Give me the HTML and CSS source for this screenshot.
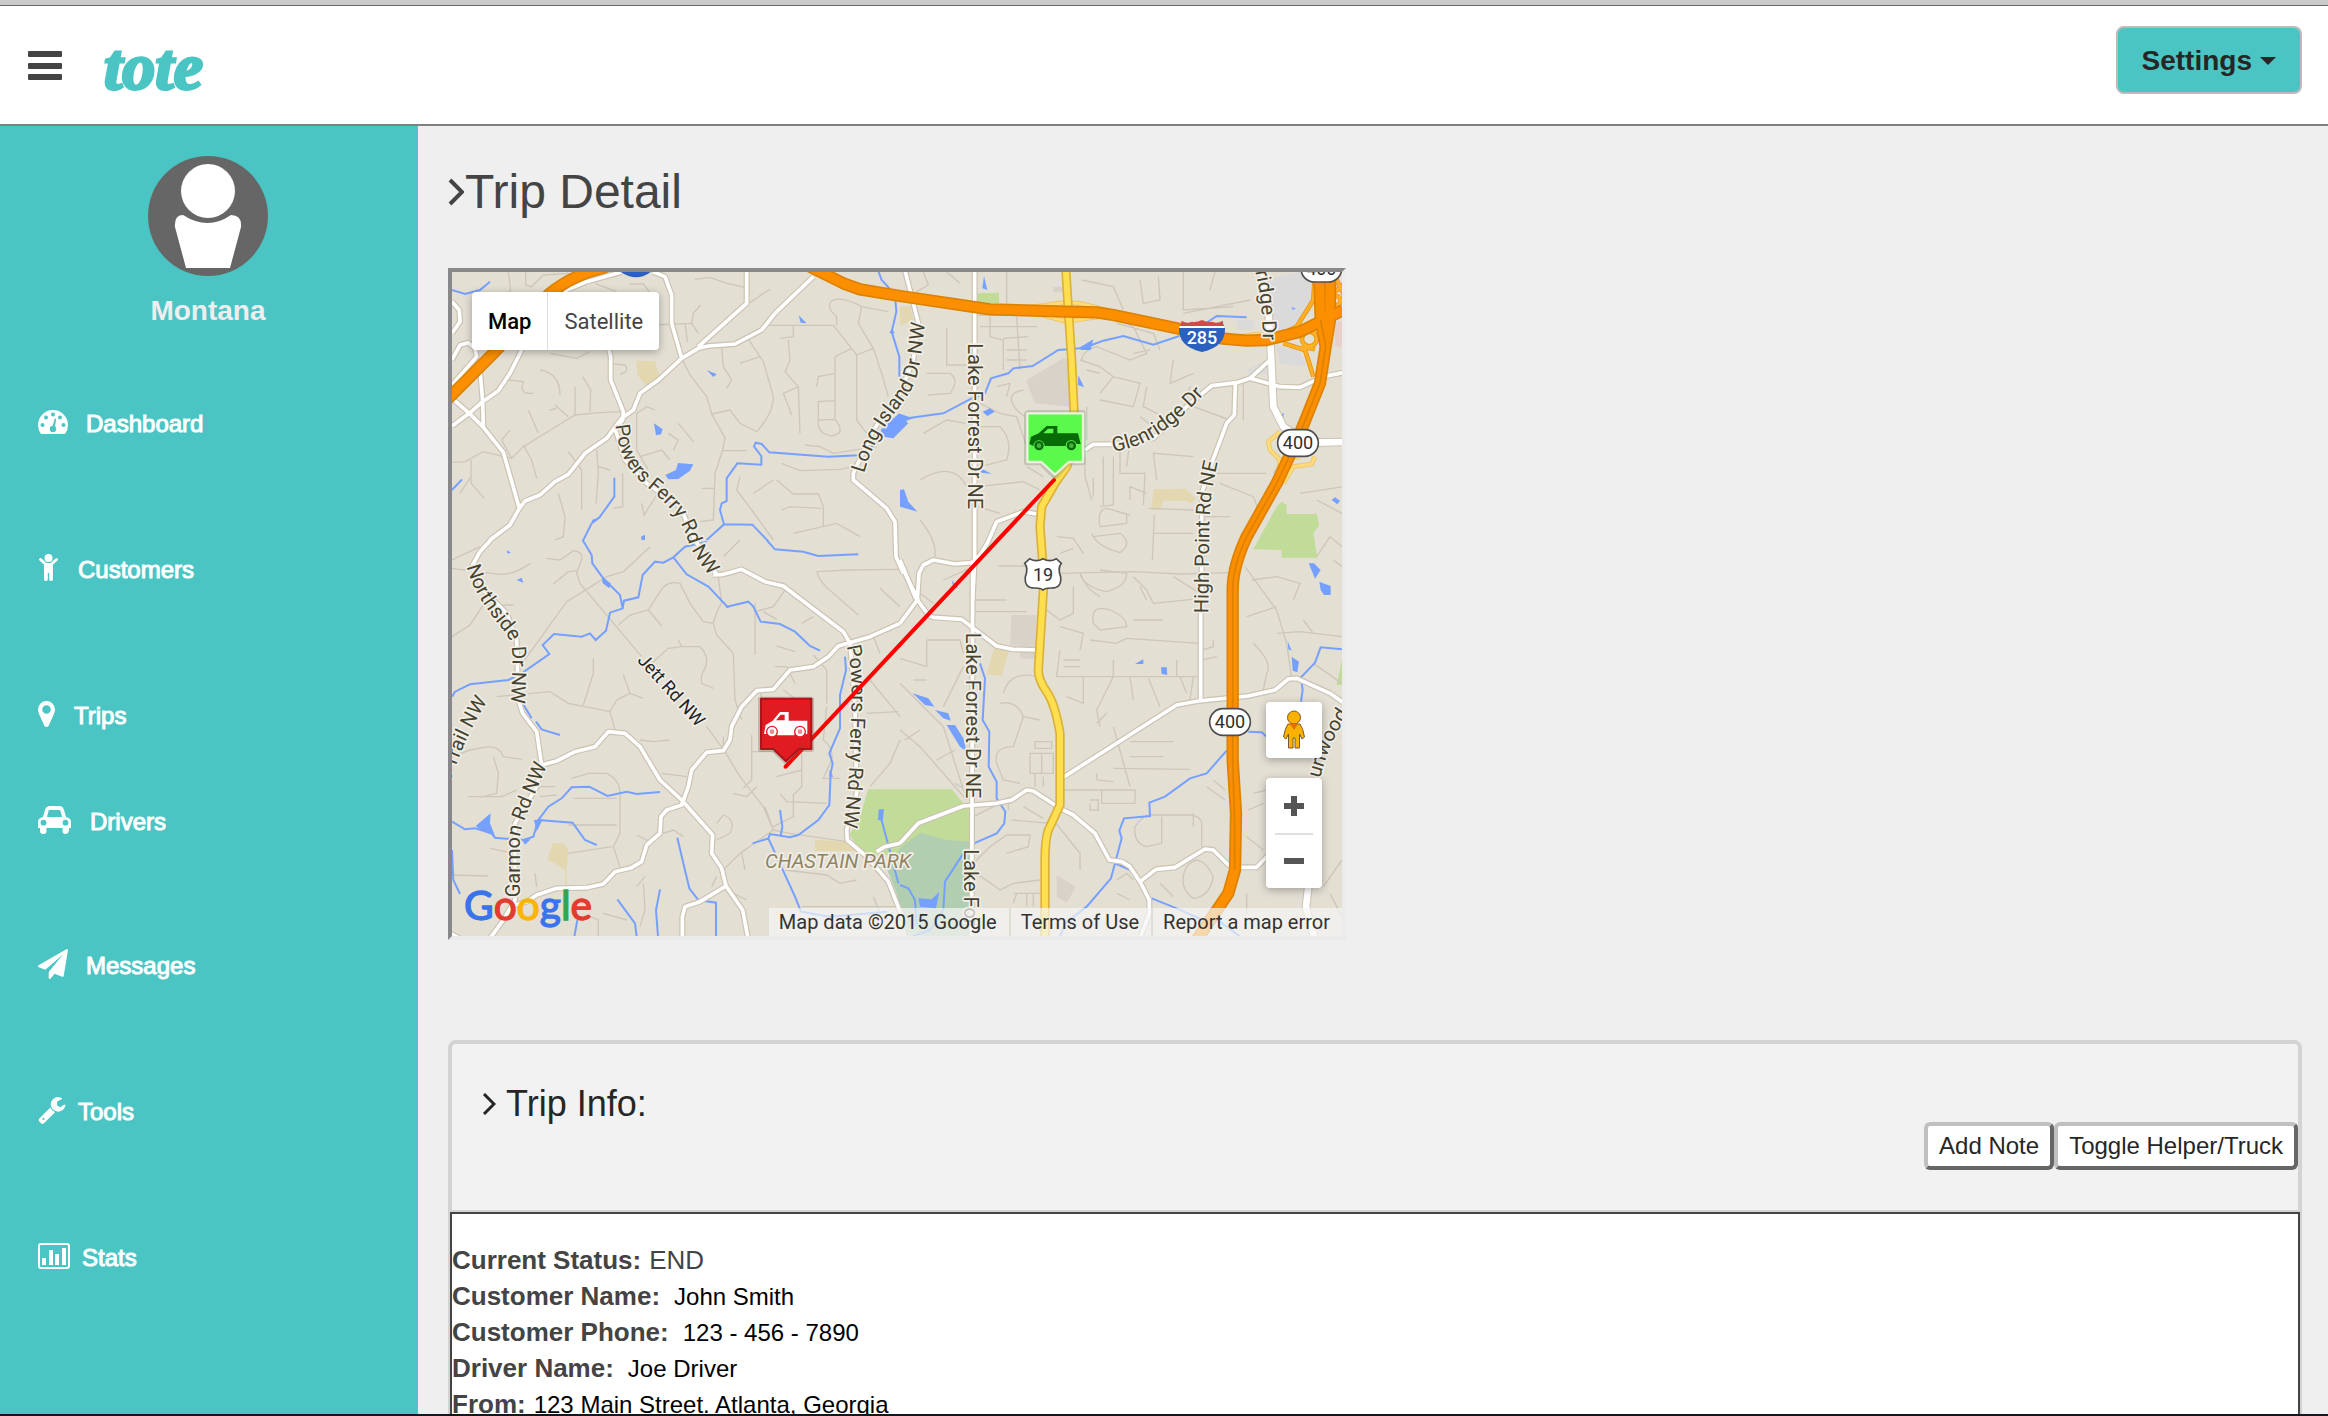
FILE: index.html
```html
<!DOCTYPE html>
<html lang="en">
<head>
<meta charset="utf-8">
<title>Tote - Trip Detail</title>
<link rel="stylesheet" href="styles.css">
</head>
<body>
<header class="topbar">
  <button class="menu-btn" type="button" aria-label="Menu">
    <svg width="34" height="30" viewBox="0 0 34 30"><g fill="#444"><rect width="34" height="6" rx="1"/><rect y="12" width="34" height="6" rx="1"/><rect y="23" width="34" height="6" rx="1"/></g></svg>
  </button>
  <a class="logo" href="#">tote</a>
  <button class="settings" type="button">Settings <span class="caret"></span></button>
</header>

<div class="shell">
  <aside class="sidebar">
    <svg class="avatar" viewBox="0 0 120 120"><circle cx="60" cy="60" r="60" fill="#666"/><ellipse cx="60" cy="35" rx="27" ry="27" fill="#fff"/><path d="M35 59Q60 75 83 59Q94 59 93 71L82 112H38L27 71Q26 59 35 59Z" fill="#fff"/></svg>
    <p class="user">Montana</p>
    <nav>
      <ul class="nav">
        <li><a href="#"><svg width="30" height="26" viewBox="0 0 30 26"><path fill="#fff" d="M3 25Q0 21 0 16A15 15 0 0 1 30 16Q30 21 27 25Z"/><g fill="#4ac5c3"><circle cx="4.500" cy="16" r="2"/><circle cx="8" cy="8.500" r="2"/><circle cx="15" cy="5.500" r="2"/><circle cx="22" cy="8.500" r="2"/><circle cx="25.500" cy="16" r="2"/><circle cx="15" cy="20" r="3.200"/><path d="M14 19L16.800 9.500L18.200 10L16.500 20Z"/></g></svg>Dashboard</a></li>
        <li><a href="#"><svg width="22" height="28" viewBox="0 0 22 28"><circle cx="10.500" cy="4" r="4" fill="#fff"/><path fill="none" stroke="#fff" stroke-width="3" stroke-linecap="round" d="M2.500 5.500L8 10.500M18.500 5.500L13 10.500"/><path fill="#fff" d="M6 9H15V26Q13 28 11.200 26V19H9.800V26Q8 28 6 26Z"/></svg>Customers</a></li>
        <li class="tight"><a href="#"><svg width="18" height="26" viewBox="0 0 18 26"><path fill="#fff" fill-rule="evenodd" d="M8.500 0A8.500 8.500 0 0 1 17 8.500Q17 11 15.500 14L10.500 25Q8.500 27 6.500 25L1.500 14Q0 11 0 8.500A8.500 8.500 0 0 1 8.500 0ZM8.500 4.200A4.300 4.300 0 1 0 8.500 12.800A4.300 4.300 0 1 0 8.500 4.200Z"/></svg>Trips</a></li>
        <li class="break"><a href="#"><svg width="34" height="28" viewBox="0 0 34 28"><path fill="#fff" fill-rule="evenodd" d="M5 11L7 4Q8 0 12 0H21Q25 0 26 4L28 11Q33 12 33 16V22H31V25Q30 28 27.500 28Q24.500 28 24.500 25V22H8.500V25Q8.500 28 5.500 28Q2 28 2 25V22H0V16Q0 12 5 11ZM9 11H24L22.500 5Q22.500 4 21 4H12Q10.500 4 10.500 5ZM5.500 13.800A2.900 2.900 0 1 0 5.500 19.600A2.900 2.900 0 1 0 5.500 13.800ZM27.500 13.800A2.900 2.900 0 1 0 27.500 19.600A2.900 2.900 0 1 0 27.500 13.800Z"/></svg>Drivers</a></li>
        <li><a href="#"><svg width="30" height="30" viewBox="0 0 1792 1792"><path fill="#fff" d="M1764 11q33 24 27 64l-256 1536q-5 29-32 45-14 8-31 8-11 0-24-5l-453-185-242 295q-18 23-49 23-13 0-22-4-19-7-30.500-23.500t-11.500-36.500v-349l864-1059-1069 925-395-162q-37-14-40-55-2-40 32-59l1664-960q15-9 32-9 20 0 36 11z"/></svg>Messages</a></li>
        <li class="near"><a href="#"><svg width="28" height="28" viewBox="60 60 1690 1720"><path fill="#fff" d="M448 1472q0-26-19-45t-45-19-45 19-19 45 19 45 45 19 45-19 19-45zm644-420l-682 682q-37 37-90 37-52 0-91-37l-106-108q-38-36-38-90 0-53 38-91l681-681q39 98 114.500 173.500t173.500 114.500zm634-435q0 39-23 106-47 134-164.500 217.500t-258.500 83.500q-185 0-316.500-131.500t-131.500-316.500 131.500-316.500 316.500-131.500q58 0 121.500 16.500t107.500 46.500q16 11 16 28t-16 28l-293 169v224l193 107q5-3 79-48.500t135.500-81 70.500-35.500q15 0 23.500 10t8.500 25z"/></svg>Tools</a></li>
        <li class="near"><a href="#"><svg width="32" height="26" viewBox="0 0 32 26"><rect x="1" y="1" width="30" height="24" rx="2" fill="none" stroke="#fff" stroke-width="2"/><path fill="#fff" d="M4 15h4v7H4zM11 7h4v15h-4zM17 11h4v11h-4zM24 5h4v17h-4z"/></svg>Stats</a></li>
      </ul>
    </nav>
  </aside>

  <main class="content">
    <h1><svg width="16" height="28" viewBox="0 0 16 28"><path d="M2 2L14 14L2 26" fill="none" stroke="#444" stroke-width="4"/></svg>Trip Detail</h1>

    <section class="map" aria-label="Trip map">
      <svg class="map-canvas" viewBox="0 0 2670 1992" preserveAspectRatio="xMidYMid slice">
        <defs>
          <g id="roads">
            <g transform="translate(-36 -396)"><path d="M36 485L58 510L60 545L36 580M36 660L60 615L85 608L105 625L110 650L36 735M36 775L88 820L130 862L190 937L238 1105M36 858L88 820L128 785L175 752L210 700L245 630L380 450L440 425L545 396M120 690L128 785L130 862M150 1200L210 1155L238 1105L255 1083L300 1065L345 1025L385 1003L435 940L500 895L545 835L580 810L600 760L655 720L725 655L775 625L805 618L885 612L965 570L1005 520L1120 410M500 600L512 650V720L550 815L548 840L525 865L555 960L620 1030L720 1100L765 1200L830 1305M640 396L675 410L695 465V550L725 655M920 380V490L775 620M1435 550L1420 660L1380 760L1300 870L1240 1000V1020L1340 1105L1365 1145L1368 1250L1390 1300"/></g>
            <g transform="translate(1344 -36)"><path d="M224 20V905L218 1020M12 20L40 130L55 190M555 570L580 553H640L760 535L860 440L935 377L1010 368L1050 355L1140 380L1200 382L1270 350L1330 338M1006 368L1003 465L980 490L935 610L905 700V1020M1050 355L1110 300M410 762L370 755L290 785L262 850L240 885L215 908L165 912L100 900L70 915L57 940L52 1020L0 1090M0 910L55 1020"/></g>
            <g transform="translate(-36 804)"><path d="M152 0L120 35L98 75L130 150L200 220L230 300L235 480L248 520L290 575L305 675L350 663L405 635L465 620L505 575L555 580L600 620L660 720L725 780L818 885L815 940L845 985L858 1038L908 1110L925 1200M305 675L290 740L225 850V1080L190 1140L150 1195M225 1095L260 1085L290 1065L350 1045L440 1043L490 1032L525 995L575 983L605 965L620 915L660 880L663 830L680 810L725 795L745 740L755 690L800 637L850 632L870 600L875 560L905 500L950 452L1000 448L1050 390L1120 380L1165 350L1195 318L1290 290L1380 250M820 105L850 103L905 88L975 125L1030 138L1210 275L1230 310L1245 500L1250 760L1220 870L1222 900L1280 950L1345 1025L1390 1140M1310 935L1335 920L1380 910M858 1038L780 1085L735 1100L727 1130V1200M30 1180L60 1195"/></g>
            <g transform="translate(1344 864)"><path d="M0 0L45 110L85 165L100 172L185 178L240 220L290 258L340 268L410 270M218 0L215 1128M0 850L55 790L190 738L290 730L335 720L380 690L400 693L480 745L520 765L585 820L628 900L665 905L690 920L720 965L748 1020V1060L720 1135M720 965L768 928L825 922L915 867L940 870L985 915L1025 922H1070L1110 880M485 655L830 435L895 423L1045 408L1125 390L1165 357L1190 355L1290 400L1330 428M902 160V423"/></g>
          </g>
          <g id="wide">
            <g transform="translate(1344 -36)"><path d="M1085 20L1105 150L1112 260L1120 440L1150 500L1180 520M1250 548L1330 546"/></g>
            <g transform="translate(1344 864)"><path d="M1225 980L1218 1040L1245 1140"/></g>
          </g>
          <g id="ramps" transform="translate(1344 -36)"><path d="M390 142L490 128L540 130L620 150M390 155L500 185L620 165M1140 515L1105 545L1110 570L1140 600L1130 670M1245 590L1235 612L1180 620L1150 670M1140 600L1200 590M1020 230L1070 222L1120 230"/></g>
          <path id="us19" transform="translate(1344 -36)" d="M497 20L505 150L515 300L522 450L515 580L500 620L465 670L425 740L420 800L432 960L415 1230Q415 1260 440 1295T480 1420V1635L445 1710Q435 1740 435 1800V2040"/>
          <g id="loops" transform="translate(1344 -36)"><path d="M1245 40L1240 120L1190 200L1120 235M1150 250L1215 270L1240 350M1335 70L1300 100L1290 150M1300 40L1335 110M1228 215a22 22 0 1 0 .1 0M1308 108a14 14 0 1 0 .1 0M1245 268L1205 260"/></g>
          <g id="freeway" transform="translate(1344 -36)"><path d="M-1380 440L-1220 280L-1050 100Q-1000 60 -940 38L-880 20M-300 5L-170 70L-120 88L0 108L270 148L500 155L590 157L640 165L830 205L970 236L1040 242L1100 240L1200 215L1330 150M1258 50L1262 180L1277 260L1260 370L1200 520L1130 670L1040 830Q998 920 998 990V1500L1008 1660L1005 1830L985 1900L890 2040M1290 50V180L1277 260"/></g>
          <path id="pNorth" d="M80 80C100 160 150 220 190 270S215 350 213 500"/>
          <path id="pPowers" d="M527 855C535 950 570 1000 625 1045S720 1130 740 1190S780 1270 850 1360"/>
          <path id="pPowers2" d="M1220 318C1240 400 1235 500 1232 560S1230 750 1202 910"/>
          <path id="pGarmon" d="M240 1072V900C240 850 290 760 335 640"/>
          <path id="pTrail" d="M20 760C60 630 100 540 180 430"/>
          <path id="pLong" d="M1272 1000C1300 900 1340 850 1390 785S1440 680 1462 490"/>
          <path id="pGlen" d="M640 575C740 560 820 510 955 355"/>
          <path id="pHigh" d="M925 1060L928 800C930 730 935 670 970 540"/>
          <path id="pRidge" d="M1066 34C1080 100 1090 150 1088 290"/>
          <path id="pWood" d="M1260 655C1280 580 1300 520 1370 430"/>
        </defs>
        <rect width="2670" height="1992" fill="#e3dfd3"/>

        <!-- parks, schools and built-up areas -->
        <g fill="#e3d7af">
          <path transform="translate(-36 -396)" d="M590 662L645 664L658 712L620 738L592 705Z"/>
          <path transform="translate(1344 -36)" d="M0 140L30 138L40 180L0 197ZM762 688L855 686L888 715L875 730L855 722H790L780 750L753 748Z"/>
          <path transform="translate(-36 804)" d="M1125 900L1225 905L1260 933H1125ZM338 910H370L385 930L380 990V1035H376V990L322 958Z"/>
          <path transform="translate(1344 864)" d="M283 262L327 268L305 347L260 343Z"/>
        </g>
        <g fill="#d8d2c9">
          <path transform="translate(1344 -36)" d="M380 360L490 295L510 300V440L405 430L385 380ZM460 80H490V97H460Z"/>
          <path transform="translate(1344 864)" d="M335 165H410L405 298L360 295V258L330 255ZM470 945L528 980L500 1028L470 1010Z"/>
          <path transform="translate(1344 -36)" fill="#dadadb" d="M1090 60L1200 36H1240V150L1150 230L1100 190ZM1010 180H1060V210H1010ZM1040 330L1100 300V340L1050 350ZM1130 260L1200 270L1220 320L1140 310Z"/>
          <path transform="translate(1344 -36)" fill="#e8cfc9" d="M1305 190L1330 180V260H1305Z"/>
        </g>
        <g fill="#c1db98">
          <path transform="translate(1344 -36)" d="M232 100L297 98V130H232ZM1130 740L1145 725L1160 735V762H1250L1258 795L1240 820L1252 893H1145V870L1060 868Z"/>
          <path transform="translate(-36 804)" d="M1285 748H1535L1570 790L1592 795V920L1280 950L1228 885L1260 830Z"/>
          <path transform="translate(1344 864)" d="M1326 300L1310 375H1326Z"/>
          <path transform="translate(-36 804)" fill="#b1ceb1" d="M1340 985L1380 925L1440 878L1520 900L1592 905V1190H1400L1370 1060Z"/>
        </g>

        <!-- local streets -->
        <g fill="none" stroke="#cdc7ba" stroke-width="4">
          <path transform="translate(-36 -396)" d="M205 396L212 450L170 485M257 396V435L275 440L310 405L390 400M465 430L530 455M570 432H610L650 485M765 418L810 412L860 430L930 445M990 447L930 488M640 555L755 550L775 580M735 550L742 605M755 550L760 520L782 495M980 556H1180L1235 625L1250 645V840L1280 880M1180 480Q1160 490 1175 515L1190 530V556M1180 480Q1210 470 1265 500L1345 515M1265 500L1255 550L1300 625L1250 645M1300 625L1325 700L1345 770M1235 625L1185 650V840M1185 700L1135 710L1130 740M1185 782L1135 785V840L1185 838M1135 840Q1130 880 1175 888Q1220 880 1185 838M1060 556V590L1020 595M1045 600L1050 660L1035 695L1075 740L1080 880M1075 740L1030 760L1055 825M920 590L970 665L1000 770Q1000 820 950 875L900 850L870 810L815 822M960 650L900 670M725 655L750 705L800 770L815 822L855 893L848 930L825 1000L820 1140L780 1145M848 932H920M845 625L850 680L875 720L860 745M545 815L480 818L405 825L250 920L215 955L130 935L75 965L36 967M93 960V1030L133 1075M93 1010L60 1060M215 955L185 900L210 870M265 810L295 880M250 915L275 960L290 1015M385 935L425 990V1110M345 795L385 830M330 810L350 805M405 825V740M450 815L452 750L428 710M360 765Q360 700 300 690M205 720L250 725Q235 765 280 760M330 640L410 655L450 635M505 670L555 675Q570 695 540 702M590 820V930L625 990M590 820L620 800L645 810M715 850L760 905M685 880L715 900L700 930M600 950L665 930L690 960M470 930L475 1000L468 1090M475 980L510 990M520 1105L548 1100V1000M355 1060L375 1130L370 1190L345 1200M605 1090L612 1125L660 1050M785 1045H825M1095 915L1140 920L1180 940L1310 920M1025 970L1080 992L1200 988L1240 980M900 1010L890 1050L935 1110L1000 1200M1010 1020L1060 1062H1135L1150 1100V1160M940 1060L1000 1020M1025 1110L1050 1100L1145 1105M1060 1180L1190 1150L1260 1190"/>
          <path transform="translate(1344 -36)" d="M70 36L85 75L50 95M140 36L180 70M320 36V130M230 165H390M240 200H410M140 205V315H200M270 170V230L310 240V330M350 170L360 330M310 235L385 230M320 270H380M320 300H380M80 340H150Q180 360 150 400L85 405M290 380L330 370L320 410M370 390Q310 400 350 450L375 470M240 430L300 460L350 470L380 560M70 520L140 480L200 490M60 660Q160 600 200 680M232 680L370 665L420 690M232 500H300Q340 540 320 600L240 620M545 60L640 80L670 150M560 180L640 170L700 200L740 280L690 300L590 260Q550 270 545 300M600 400L640 350L720 370L700 440L600 420M720 60L730 130L780 120L775 50M650 190L760 220L780 270M750 270L700 280M560 330L600 340M850 36V150L1000 140M850 160L1050 120M820 300L810 370L880 340M740 380L730 440L790 470M760 500L720 470M870 380L850 450M610 590V735M640 590V735L600 740M660 570V640H735L730 735M555 590V650L575 720M580 655V710M560 440V540M690 720V680L740 700M690 765L620 745Q590 750 600 800L680 790V765M575 820Q590 860 660 878Q700 850 660 820L580 830M470 830L520 835L550 880M480 880L520 865M763 765L757 900M760 820H880M745 745L880 750M770 660L760 580L880 590M900 770H990M690 540L680 620M940 640H1100M960 670L1060 710L1080 760M1120 640L1140 610M1200 700L1330 680M1250 720L1326 760M1290 830L1250 890M1290 830L1326 860M1300 900L1326 920M470 940L700 935L840 942L990 938M540 940Q560 990 600 1010M720 980L740 1020M820 950L900 1000M295 918H420M60 780Q110 840 105 890M380 620L430 650M540 300L600 320L640 350M232 740L300 760M1030 480V350M880 440L990 480M945 36L930 90"/>
          <path transform="translate(-36 804)" d="M36 85L85 92L180 103Q220 105 272 70M36 60L120 20M340 132L385 95L415 92M318 55L360 60L400 32Q430 35 425 60L410 100L420 130L605 350M500 110L445 145L380 185L290 310L250 365M550 95L500 110M550 95L630 20M36 290L90 255L130 195H220M535 255L570 225L625 210L660 155Q680 120 720 130L750 190L790 245L820 250L830 285L880 340L885 480L905 540M820 250Q830 210 845 190L835 110M625 210L665 258M635 370L685 325L725 320L780 320Q810 350 795 385Q780 410 785 430L820 445M725 320L715 300M945 190V345M945 215L1000 200L1035 150M970 215L1010 238M1085 250L1120 230M1130 95L1225 90L1380 88M1130 95Q1140 130 1180 160L1255 225M1320 145L1380 200M850 50L900 0M1010 318L1065 335M1005 380H1040L1065 430M1120 345L1160 390V490M170 470L330 455L385 490L510 515L525 570M430 495L460 400V355M510 515L530 480L570 460L610 475M570 460L550 405M800 560L855 635L900 710L970 800L1000 870M850 632V590M600 600L640 605M640 605L690 600M935 585V720L910 745M935 635H1010M960 450L970 500M1030 450L1070 480M1085 525L1120 530M1160 500L1150 600Q1180 620 1175 660L1150 715H1200M1085 640V740L1060 765V830L1000 860M1085 690L1010 710M1020 760L1040 785L1160 790M36 650L90 630L145 620Q180 620 190 650L245 658M160 650L175 700L170 760L130 770M85 770H185L230 750M395 715L445 700H500Q540 720 540 760V880L520 920L540 980M300 740H345M300 770L350 765M400 775H530M385 855H530M385 940L515 920M665 700L740 710M590 885L640 910M670 880L700 870L730 890M830 850L850 825Q890 840 870 880L830 900M880 760L920 770L950 740M850 990L900 940L1000 870L1050 880L1220 905M1000 870L975 800M905 940L915 990M815 1040L830 1010M36 1005L145 1008M150 925L220 940M285 1000L290 1040M590 1040L615 1010M610 1030L615 1110L600 1160M490 1120L560 1140M475 1188V1140L450 1130M1035 990L1160 1005L1200 1030L1250 1020M1085 1100H1380M880 1060L920 1080M1300 290L1320 340M1290 420L1380 530M1280 520L1375 515M1380 600L1350 670L1290 740M1300 1070L1330 1140"/>
          <path transform="translate(1344 864)" d="M100 130L60 100M130 60L220 20M225 120H320M225 155H380M80 240H180L190 280M80 240V320L0 295M80 360H40M190 320L150 400L130 440M0 370L130 500L200 720M0 510L60 560L200 720M15 540L60 510M110 600L165 570M165 670L200 690M540 40Q550 80 620 95Q680 80 680 40L600 30M580 190Q570 130 630 150Q680 170 680 200L600 210ZM700 50L740 90L760 130L905 115M700 180H790M570 240L650 250L680 235L900 250M480 200L550 220L540 270M440 150L480 180L520 160V80M480 270L470 350H905M490 300H540M490 320H540M550 350V430L500 410M640 350L590 450L600 500M640 300V350M690 350L700 420M745 355L780 440M840 350L860 400M830 300V350M905 270L940 260V240M905 300L950 290M405 545H455V565H405ZM390 580H460V640H390ZM425 580V640M405 680V640M430 650V680M490 690H680M605 690H705V730H605ZM570 730V750H595V720H570M640 500L690 680M620 460L590 490M690 545H820M690 590H790M640 625L870 628M590 640V660L640 665M705 800Q730 760 760 765H870Q910 770 905 800V860M785 770V850L740 860Q700 850 705 800M860 920Q900 870 940 950Q930 1010 880 1015Q830 980 860 920M1035 20L1130 150L1160 250L1175 355M1040 170L1130 140M1130 220L1200 215L1326 230M1240 220L1210 180M1055 60L1130 50L1200 70L1180 120M1060 250Q1120 310 1100 340L1090 390M1240 310L1326 370M920 680L975 720M940 660L975 690M880 760V800M1045 750L1090 730M1090 870L1040 830M1100 690L1060 700M220 770L300 730M325 750V710M335 780L450 790M370 740L430 775M220 910L270 860L320 825H390L385 860L320 880M230 940L300 990L340 970L420 960M350 1000L340 1030M380 1000V1040M400 1000V1040M340 1000H420M370 470L420 480M310 400Q330 330 410 350M300 430Q350 420 370 470L340 560Q280 560 290 610L310 660L360 670M650 960L680 940L700 960M650 1000L690 1020M460 780L540 880V930M1270 980L1326 900M1290 1000L1326 1070M1040 1000L1040 1060M780 970L820 1010M880 350L870 420"/>
        </g>

        <!-- creeks and ponds -->
        <g fill="none" stroke="#76a0ff" stroke-width="6">
          <path transform="translate(-36 -396)" d="M36 450L75 462L120 450L150 425M36 1050L66 1018M523 1013V1070L480 1130L455 1150L428 1204M800 1200L852 1153L840 1110L845 1090L860 1083V1015L892 970L964 974V948L942 920L947 908L965 912L988 937L1165 950L1255 946L1330 895M852 1153L937 1154L985 1204M1316 396L1325 420L1348 445L1366 480L1369 515L1355 575L1378 650V710"/>
          <path transform="translate(1344 -36)" d="M0 478L130 460L215 415L255 400L273 355L325 340L340 325L398 318L475 270L540 265L575 255L610 242L670 228L760 254L838 228M910 195L950 168L1040 172"/>
          <path transform="translate(-36 804)" d="M428 0L455 45L457 70L490 115L540 165L548 205L510 218L498 272L467 300L450 280L425 290L342 282L308 315L328 342L245 400L205 420L90 433L45 455L36 470M548 205L552 182L595 172L608 105L645 65L670 68L700 52L735 20L800 5M700 52L740 103L805 140L862 200L925 185L940 200L962 245L1020 252L1065 275L1110 318L1140 332M980 0L1005 28L1090 35L1135 48L1255 43M245 485L275 535M288 545L305 568L360 585M36 845L75 868L105 865L155 880L165 893L250 900L280 890L295 840L325 800L365 775L395 742L448 740L502 768L560 755L590 762L660 756M295 840L398 848L435 900L470 915M1215 350L1218 390L1200 465V565L1168 640L1178 670L1172 700L1168 795L1135 840L1075 885L1050 892L990 882L985 895L938 910M985 895L1065 1070L1083 1115L1170 1130L1340 1115M1020 810L1027 860L1022 888M712 893L730 970L748 1045L775 1080L828 1088V1190M532 1078L585 1150L590 1190M660 1048L648 1110L654 1190M36 930L40 1020L60 1062M403 1190L412 1140M1322 830L1345 915L1375 1030"/>
          <path transform="translate(1344 864)" d="M240 310L255 355L248 480L268 515L266 620L290 665V715L316 755L313 790L290 820L222 850M980 572L920 640L870 655L795 710L748 728L750 768L672 775L658 812L665 835L645 910L633 955L560 1040L495 1090L480 1130M645 910L690 930M755 1015L830 1045L920 1085M1045 515L1085 517L1100 530M1330 268L1262 262L1245 308L1203 352L1208 390L1203 425M0 975L25 985L45 1020L50 1100M190 880L135 965L130 1050L90 1110L40 1128M940 1070L1020 1130"/>
        </g>
        <g fill="#76a0ff">
          <path transform="translate(-36 -396)" d="M676 1005L708 990L714 969L760 973L750 992L715 1017L685 1018ZM642 850L668 868L663 883L648 886ZM800 690L830 703L820 711ZM1076 526L1100 550L1082 548ZM1322 870L1375 822L1405 850L1360 895L1330 890ZM455 1140L485 1130L460 1150ZM603 1190L615 1184V1200H605ZM1348 580L1356 565L1364 580Z"/>
          <path transform="translate(1344 -36)" d="M535 265L580 238L572 270L545 270ZM248 455L270 445L284 455L262 468ZM247 85L252 48L262 90ZM535 345L552 382L534 375ZM0 690L12 688L25 725L52 755L0 740ZM235 620L275 642L245 638ZM1137 465L1152 460L1147 485ZM1295 720L1305 712L1320 722L1312 733ZM1226 910H1242L1262 930L1245 956ZM1258 965L1292 978V1005H1272L1262 990ZM-5 460L40 475L0 490ZM155 960L175 985L160 980ZM1175 140L1188 146L1178 150Z"/>
          <path transform="translate(-36 804)" d="M485 110L512 130L508 145L488 130ZM107 858L152 820L150 850L165 888L125 872ZM282 840L308 838L290 875ZM245 898H272L255 914ZM230 120L245 113L250 128ZM200 30L213 38L203 41ZM1316 808H1332L1328 842L1314 840ZM855 195L872 200L860 205ZM1168 690L1180 710H1168Z"/>
          <path transform="translate(1344 864)" d="M38 400L85 415L103 440L75 435ZM105 450L145 460L152 482L130 475ZM140 495H165L190 535L200 575L180 560ZM705 312L730 298V312ZM783 322H800L802 345L785 342ZM1163 243L1175 272L1165 268ZM1175 290L1197 305L1192 337L1178 332ZM55 1015L95 1018L118 995L108 1045L60 1040Z"/>
        </g>

        <!-- road hierarchy: casing first, then surface -->
        <g fill="none" stroke-linejoin="round">
          <use href="#ramps" stroke="#ecc46a" stroke-width="14"/><use href="#ramps" stroke="#ffdb7a" stroke-width="9"/>
          <use href="#roads" stroke="#cbc2b2" stroke-width="18"/><use href="#wide" stroke="#cbc2b2" stroke-width="26"/>
          <use href="#roads" stroke="#fff" stroke-width="11"/><use href="#wide" stroke="#fff" stroke-width="20"/>
          <use href="#us19" stroke="#dbb237" stroke-width="28"/><use href="#us19" stroke="#ffdf4f" stroke-width="18"/>
          <use href="#loops" stroke="#e8930c" stroke-width="14"/><use href="#loops" stroke="#ffb027" stroke-width="9"/>
          <use href="#freeway" stroke="#dd8100" stroke-width="37"/><use href="#freeway" stroke="#fb8f00" stroke-width="27"/>
          <path transform="translate(1344 -36)" stroke="#dd8100" stroke-width="5" d="M1262 180L1277 260L1260 370L1200 520L1130 670L1040 830Q998 920 998 990V1500L1004 1700V1830"/>
        </g>

        <!-- road and place names -->
        <g class="map-label">
          <g transform="translate(-36 -396)"><text><textPath href="#pPowers">Powers Ferry Rd NW</textPath></text><text><textPath href="#pLong">Long Island Dr NW</textPath></text></g>
          <g transform="translate(1344 -36)"><text transform="translate(205 250) rotate(90)">Lake Forrest Dr NE</text><text><textPath href="#pGlen">Glenridge Dr</textPath></text><text><textPath href="#pHigh">High Point Rd NE</textPath></text><text><textPath href="#pRidge">ridge Dr</textPath></text></g>
          <g transform="translate(-36 804)"><text><textPath href="#pNorth">Northside Dr NW</textPath></text><text><textPath href="#pPowers2">Powers Ferry Rd NW</textPath></text><text><textPath href="#pGarmon">Garmon Rd NW</textPath></text><text><textPath href="#pTrail">ns Trail NW</textPath></text><text class="minor" transform="translate(590 362) rotate(48)">Jett Rd NW</text><text class="park" x="975" y="984">CHASTAIN PARK</text></g>
          <g transform="translate(1344 864)"><text transform="translate(197 218) rotate(90)">Lake Forrest Dr NE</text><text transform="translate(193 868) rotate(90)">Lake For</text><text><textPath href="#pWood">unwood</textPath></text></g>
        </g>

        <!-- route shields -->
        <g transform="translate(1344 -36)">
          <path d="M845 182Q860 192 875 185Q890 188 906 180Q922 188 937 185Q952 192 968 182Q968 192 975 202H837Q845 192 845 182Z" fill="#d0494b"/>
          <path d="M837 204H975Q978 260 906 276Q834 260 837 204Z" fill="#2b60bf"/><path d="M838 198H974V204H838Z" fill="#fff"/>
          <path d="M-838 36H-748Q-790 68 -838 36Z" fill="#2b60bf"/>
          <g fill="#fff" stroke="#4d4d4d" stroke-width="5"><rect x="1133" y="509" width="122" height="80" rx="40"/><rect x="929" y="1346" width="122" height="80" rx="40"/><rect x="1203" y="-14" width="122" height="80" rx="40"/><path d="M389 896Q409 908 429 896Q449 908 469 896L484 910Q472 925 482 950Q486 986 452 984Q436 984 429 990Q422 984 406 984Q372 986 376 950Q386 925 374 910Z"/></g>
          <g class="shield-text"><text x="906" y="251" class="interstate">285</text><text x="1194" y="567">400</text><text x="990" y="1404">400</text><text x="1264" y="46">400</text><text x="429" y="962">19</text></g>
        </g>

        <!-- trip line and end points -->
        <g transform="translate(1344 -36)">
          <path d="M462 660L-343 1520" stroke="#f00" stroke-width="12" stroke-linecap="round"/>
          <path d="M385 460H547V606H506L465 648L424 606H382V462Z" fill="#8a8a7c" opacity=".35" stroke="#8a8a7c" stroke-width="20" stroke-linejoin="round"/>
          <path d="M382 460H549V606H506L465 644L424 606H382Z" fill="#5cf94d" stroke="#e6f5dc" stroke-width="7" stroke-linejoin="round"/>
          <g fill="#076b07"><path fill-rule="evenodd" d="M388 552L393 530L416 520L440 498H472V520H534L542 552H530A17 17 0 0 0 497 558H434A17 17 0 0 0 400 558ZM430 520H460V506H444Z"/><circle cx="417" cy="557" r="14"/><circle cx="514" cy="557" r="14"/></g><g fill="#48b53e"><circle cx="417" cy="557" r="7"/><circle cx="514" cy="557" r="7"/></g>
        </g>
        <g transform="translate(-36 804)">
          <path d="M962 478H1114V628H1078L1038 664L1000 628H962Z" fill="#6a6055" opacity=".3" stroke="#6a6055" stroke-width="16" stroke-linejoin="round"/>
          <path d="M963 476H1114V627H1076L1038 664L1000 627H963Z" fill="#e01b22" stroke="#ad1419" stroke-width="6" stroke-linejoin="round"/>
          <g fill="#fff"><path fill-rule="evenodd" d="M972 582L977 555L998 542L1020 516H1046V542H1102V582H1096A17 17 0 0 0 1063 586H1012A17 17 0 0 0 980 582ZM1008 541H1034V524H1022Z"/><circle cx="996" cy="575" r="16" stroke="#e01b22" stroke-width="4"/><circle cx="1080" cy="575" r="16" stroke="#e01b22" stroke-width="4"/></g><g fill="#ea8a8a"><circle cx="996" cy="575" r="7"/><circle cx="1080" cy="575" r="7"/></g>
          <text class="google" x="72" y="1140"><tspan fill="#3a73ee" stroke="#3a73ee">G</tspan><tspan fill="#e33b2e" stroke="#e33b2e">o</tspan><tspan fill="#fbb505" stroke="#fbb505">o</tspan><tspan fill="#3a73ee" stroke="#3a73ee">g</tspan><tspan fill="#31a550" stroke="#31a550">l</tspan><tspan fill="#e33b2e" stroke="#e33b2e">e</tspan></text>
        </g>
      </svg>

      <div class="map-types"><button type="button" class="is-on">Map</button><button type="button">Satellite</button></div>
      <div class="map-tools">
        <button type="button" class="pegman" aria-label="Street View"><svg width="24" height="40" viewBox="0 0 24 40"><g fill="#fbb100" stroke="#7a5a2a" stroke-width="1"><path d="M6 14H18Q21 18 22.500 27L20 29L17.500 24V38H13V28H11V38H6.500V24L4 29L1.500 27Q3 18 6 14Z"/><circle cx="12" cy="7.500" r="6.500"/></g><path d="M8 14H16L12 20Z" fill="#e07010"/></svg></button>
        <div class="zoom"><button type="button" aria-label="Zoom in"><svg width="22" height="22" viewBox="0 0 22 22"><path d="M8 1h6v7h7v6h-7v7H8v-7H1V8h7z" fill="#555"/></svg></button><button type="button" aria-label="Zoom out"><svg width="22" height="22" viewBox="0 0 22 22"><path d="M1 8h20v6H1z" fill="#555"/></svg></button></div>
      </div>
      <div class="map-credits"><span>Map data ©2015 Google</span><a href="#">Terms of Use</a><a href="#">Report a map error</a></div>
    </section>

    <section class="panel">
      <header class="panel-head">
        <h2><svg width="14" height="22" viewBox="0 0 14 22"><path d="M2 1L12 11L2 21" fill="none" stroke="#262626" stroke-width="3"/></svg>Trip Info:</h2>
        <div class="actions"><button type="button">Add Note</button><button type="button">Toggle Helper/Truck</button></div>
      </header>
      <dl class="details">
        <div class="close status"><dt>Current Status:</dt><dd>END</dd></div>
        <div><dt>Customer Name:</dt><dd>John Smith</dd></div>
        <div><dt>Customer Phone:</dt><dd>123 - 456 - 7890</dd></div>
        <div><dt>Driver Name:</dt><dd>Joe Driver</dd></div>
        <div class="close"><dt>From:</dt><dd>123 Main Street. Atlanta, Georgia</dd></div>
      </dl>
    </section>
  </main>
</div>
</body>
</html>
```
FILE: styles.css
```css
* { box-sizing: border-box; }

body {
  margin: 0;
  height: 100vh;
  display: flex;
  flex-direction: column;
  overflow: hidden;
  background: #efefef;
  border-top: 5px solid #cbcbcb;
  border-bottom: 2px solid #14171c;
  color: #444;
  font-family: "Liberation Sans", Arial, Helvetica, sans-serif;
}

button { font-family: inherit; cursor: pointer; }
a { color: inherit; text-decoration: none; }
h1, h2, p, ul, dl, dd { margin: 0; padding: 0; font-weight: normal; }

.topbar {
  flex: none;
  display: flex;
  align-items: center;
  height: 121px;
  padding: 0 26px 0 28px;
  background: #fff;
  border-top: 1px solid #666;
  border-bottom: 2px solid #808084;
}
.menu-btn { display: flex; padding: 2px 0 0; border: 0; background: none; }
.logo {
  margin-left: 42px;
  padding-top: 4px;
  color: #4ac5c3;
  font: italic bold 66px/80px "Liberation Serif", "Times New Roman", serif;
  -webkit-text-stroke: 3px #4ac5c3;
}
.settings {
  display: flex;
  align-items: center;
  gap: 8px;
  height: 68px;
  margin: 0 0 10px auto;
  padding: 2px 24px 0;
  border: 2px solid #bbb;
  border-radius: 8px;
  background: #4ac5c3;
  color: #262626;
  font-size: 28px;
  font-weight: bold;
}
.caret { border: 8px solid transparent; border-top-color: #262626; border-bottom: 0; }

.shell { flex: 1; min-height: 0; display: flex; }

.sidebar { flex: none; width: 418px; padding: 30px 2px 0 0; background: #4ac5c3; color: #fff; }
.avatar { display: block; width: 120px; height: 120px; margin: 0 auto; }
.user { margin-top: 19px; text-align: center; color: #eee; font-size: 28px; font-weight: bold; line-height: 32px; }
.nav { margin-top: 77px; padding-left: 38px; list-style: none; }
.nav li { margin-bottom: 106px; }
.nav .tight { margin-bottom: 66px; }
.nav .break { margin-bottom: 104px; }
.nav a {
  display: flex;
  align-items: center;
  gap: 18px;
  height: 40px;
  font-size: 24px;
  -webkit-text-stroke: 1px #fff;
}
.nav .near a { gap: 12px; }
.nav svg { margin-bottom: 4px; }

.content { flex: 1; min-width: 0; padding: 38px 26px 0 30px; overflow: hidden; }
h1 { display: flex; align-items: center; gap: 1px; font-size: 48px; line-height: 56px; }

.map {
  position: relative;
  width: 898px;
  max-width: 100%;
  margin-top: 48px;
  border: 4px solid;
  border-color: #88888a #ebebeb #ebebeb #88888a;
  overflow: hidden;
  font-family: Roboto, sans-serif;
}
.map-canvas { display: block; width: 100%; height: auto; }
.map-label {
  font-size: 60px;
  fill: #45432f;
  stroke: #f1eee6;
  stroke-width: 10px;
  stroke-linejoin: round;
  paint-order: stroke;
}
.minor { font-size: 54px; fill: #222; }
.park { fill: #8f8364; font-style: italic; }
.shield-text { font-size: 54px; text-anchor: middle; fill: #2d2d2d; }
.interstate { fill: #fff; font-weight: 500; }
.google { font: 122px Lato, sans-serif; stroke-width: 4px; }

.map-types, .map-tools, .map-credits { position: absolute; display: flex; }
.map-types {
  top: 20px;
  left: 20px;
  height: 58px;
  border-radius: 4px;
  background: #fff;
  box-shadow: 0 2px 8px rgba(0, 0, 0, .3);
}
.map-types button {
  padding: 0 16px;
  border: 0;
  background: none;
  color: #444;
  font-size: 22px;
}
.map-types .is-on { color: #000; font-weight: 500; border-right: 1px solid #ddd; }
.map-tools { right: 20px; bottom: 48px; flex-direction: column; gap: 20px; }
.pegman, .zoom {
  display: flex;
  align-items: center;
  justify-content: center;
  width: 56px;
  padding: 0;
  border: 0;
  border-radius: 4px;
  background: #fff;
  box-shadow: 0 2px 8px rgba(0, 0, 0, .3);
}
.pegman { height: 56px; }
.zoom { flex-direction: column; height: 110px; }
.zoom button { display: flex; align-items: center; justify-content: center; width: 38px; height: 54px; padding: 0; border: 0; background: none; }
.zoom button + button { border-top: 2px solid #e0e0e0; }
.map-credits { right: 0; bottom: 0; background: rgba(245, 245, 245, .7); color: #333; font-size: 20px; line-height: 28px; }
.map-credits > * { padding: 0 12px 0 10px; }
.map-credits > * + * { border-left: 2px solid #e0ddd4; }

.panel { margin-top: 100px; border: 4px solid #d3d3d3; border-radius: 8px; background: #f2f2f2; }
.panel-head { display: flex; justify-content: space-between; align-items: flex-start; padding: 0 0 40px 30px; border-bottom: 2px solid #d3d3d3; }
h2 { display: flex; align-items: center; gap: 10px; margin-top: 40px; color: #262626; font-size: 36px; line-height: 40px; }
.actions { display: flex; margin-top: 78px; }
.actions button {
  height: 48px;
  padding: 0 11px;
  border: 4px solid;
  border-color: #c0c0c0 #666 #666 #c0c0c0;
  border-radius: 6px;
  background: #fff;
  color: #262626;
  font-size: 24px;
}
.details { margin: 0 -2px; padding: 28px 0; border: 2px solid #444; background: #fff; }
.details div { display: flex; align-items: baseline; gap: 14px; height: 36px; line-height: 36px; }
.details .close { gap: 8px; }
dt { font-size: 26px; font-weight: bold; }
dd { color: #000; font-size: 24px; }
.status dd { color: #444; font-size: 26px; }
```
